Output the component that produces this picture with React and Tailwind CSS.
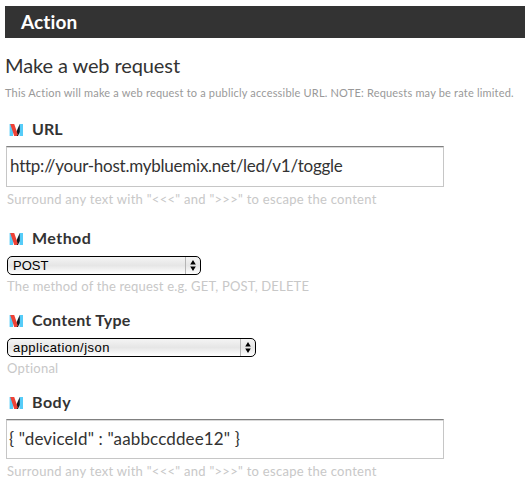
function ChannelIcon() {
  return (
    <svg className="block h-3 w-[14px] shrink-0" viewBox="0 0 14 12">
      <path d="M.6 0H4V12H.6ZM10.5 0H14V12H10.5Z" fill="#56ccf8" />
      <path d="M10.8 0V8L9 12H6.8L7 8.5Z" fill="#101820" />
      <path d="M1.2 0H5.2L8.8 10.5L7.8 12H5.2Z" fill="#ee4236" />
    </svg>
  );
}

function Label({ children, spacing = '' }) {
  return (
    <div className="ml-[3px] flex h-[18px] items-center gap-[9px] text-base font-bold leading-[18px] text-[#333]">
      <span className="pt-px"><ChannelIcon /></span>
      <span className={spacing}>{children}</span>
    </div>
  );
}

function Hint({ children, className }) {
  return <p className={`ml-px h-4 text-[13px] leading-4 text-[#c8c8c8] ${className}`}>{children}</p>;
}

function TextBox({ children, className }) {
  return (
    <div className={`w-[438px] border border-[#c6c6c6] border-t-[#808080] bg-white text-[#333] shadow-[inset_0_1px_0_#d8d8d8] ${className}`}>
      {children}
    </div>
  );
}

function Select({ children, className }) {
  return (
    <div
      className={`ml-px mt-[9px] flex h-[19px] overflow-hidden rounded-[5px] border border-black bg-linear-to-b from-[#f4f4f4] via-[#e6e6e6] to-white pl-[5px] font-['Liberation_Sans',Arial,sans-serif] leading-[17px] text-black ${className}`}
    >
      <span className="flex-1">{children}</span>
      <span className="flex w-[15px] items-center justify-center border-l border-[#b5b5b5]">
        <svg className="block" width="6" height="11" viewBox="0 0 6 11">
          <path d="M3 0L5.8 4.6H.2ZM3 11L.2 6.4H5.8Z" fill="#000" />
        </svg>
      </span>
    </div>
  );
}

export default function App() {
  return (
    <main className="h-[484px] w-[525px] overflow-hidden bg-white pl-[5px] pt-[6px] font-[Lato,sans-serif] whitespace-nowrap [font-variant-ligatures:none]">
      <header className="h-8 bg-[#333] pl-4 text-[19px] font-bold leading-[31px] tracking-[0.1px] text-white">
        Action
      </header>
      <h1 className="mt-[17px] h-5 text-[20px] leading-5 tracking-[-0.1px] text-[#333]">Make a web request</h1>
      <p className="mt-[9px] h-[18px] text-[11px] leading-[18px] tracking-[0.19px] text-[#999]">
        This Action will make a web request to a publicly accessible URL. NOTE: Requests may be rate limited.
      </p>

      <section className="mt-[18px] pl-px">
        <Label>URL</Label>
        <TextBox className="mt-2 h-[41px] pl-[3px] text-[17px] leading-[38px] tracking-[-0.24px]">http://your-host.mybluemix.net/led/v1/toggle</TextBox>
        <Hint className="mt-1 tracking-[0.28px]">Surround any text with "&lt;&lt;&lt;" and "&gt;&gt;&gt;" to escape the content</Hint>
      </section>

      <section className="mt-[22px] pl-px">
        <Label spacing="tracking-[0.45px]">Method</Label>
        <Select className="w-[194px] text-[13px]">POST</Select>
        <Hint className="mt-[3px] tracking-[0.17px]">The method of the request e.g. GET, POST, DELETE</Hint>
      </section>

      <section className="mt-[17px] pl-px">
        <Label spacing="tracking-[0.25px]">Content Type</Label>
        <Select className="w-[249px] text-[13px] tracking-[0.45px]">application/json</Select>
        <Hint className="mt-[3px] tracking-[0.25px]">Optional</Hint>
      </section>

      <section className="mt-[17px] pl-px">
        <Label spacing="tracking-[0.5px]">Body</Label>
        <TextBox className="mt-2 h-10 pl-[2px] text-[17px] leading-[37px] tracking-[0.13px]">{'{ "deviceId" : "aabbccddee12" }'}</TextBox>
        <Hint className="mt-1 tracking-[0.28px]">Surround any text with "&lt;&lt;&lt;" and "&gt;&gt;&gt;" to escape the content</Hint>
      </section>
    </main>
  );
}
